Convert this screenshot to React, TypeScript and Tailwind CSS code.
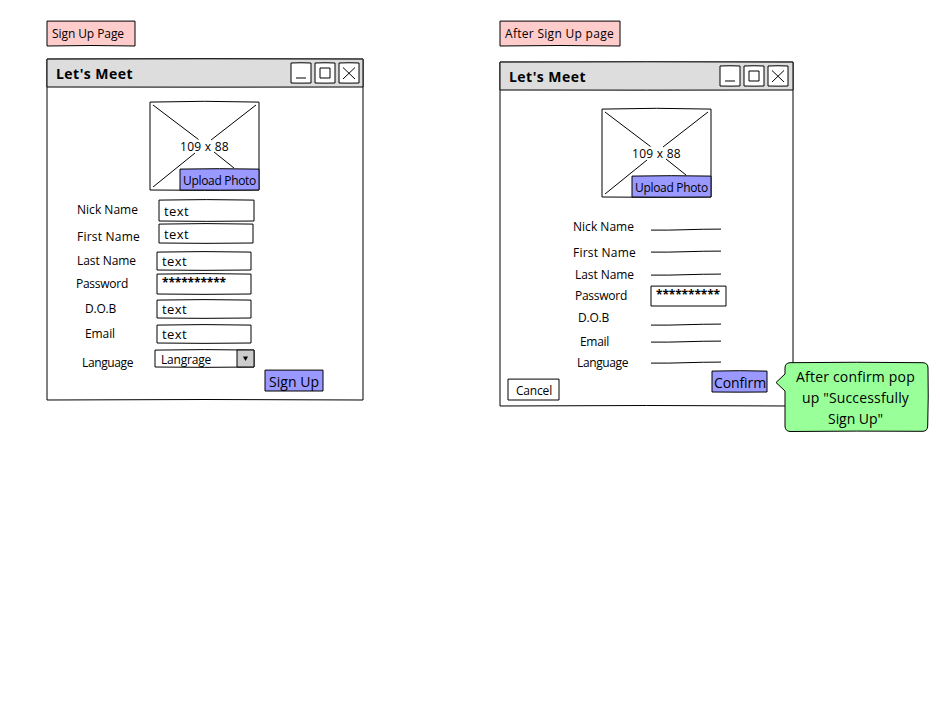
import { useLayoutEffect, useRef, useState } from "react";
import type { ReactNode } from "react";

/** Text whose tracking is adjusted so that the line fills `w` pixels. */
function Fit({ w, children, className = "" }: { w: number; children: string; className?: string }) {
  const ref = useRef<HTMLSpanElement>(null);
  const [tracking, setTracking] = useState(0);
  useLayoutEffect(() => {
    if (ref.current) {
      const natural = ref.current.getBoundingClientRect().width;
      setTracking((w - natural) / children.length);
    }
  }, []);
  return (
    <span ref={ref} className={`block w-max shrink-0 whitespace-pre ${className}`} style={{ letterSpacing: tracking }}>
      {children}
    </span>
  );
}

/** Hand-drawn rectangle: `top` and `bottom` bow the horizontal strokes. */
function Sketch({ w, h, fill = "none", top = -1, bottom = 0.7 }: { w: number; h: number; fill?: string; top?: number; bottom?: number }) {
  return (
    <svg className="absolute left-0 top-0 overflow-visible" width={w} height={h} fill={fill} stroke="#000" strokeLinejoin="round">
      <path d={`M0 .1Q${w / 2} ${0.1 + top} ${w} .1L${w} ${h}Q${w / 2} ${h + bottom} 0 ${h}Z`} />
    </svg>
  );
}

interface BoxProps {
  w: number;
  h: number;
  className: string;
  fill?: string;
  top?: number;
  bottom?: number;
  children?: ReactNode;
}

function Box({ w, h, className, fill, top, bottom, children }: BoxProps) {
  return (
    <div className={`relative flex shrink-0 ${className}`} style={{ width: w, height: h }}>
      <Sketch w={w} h={h} fill={fill} top={top} bottom={bottom} />
      <div className="relative flex w-full">{children}</div>
    </div>
  );
}

function WindowButtons() {
  return (
    <div className="flex gap-1">
      {["M5 15h10", "M5 5h10v10H5Z", "M4 4.5 16 16M16 4.5 4 16"].map((d) => (
        <svg key={d} width="20" height="20" className="overflow-visible" fill="none" stroke="#000">
          <path d="M0 0Q10-.5 20 0L20 20Q10 20.3 0 20Z" fill="#fff" strokeLinejoin="round" />
          <path d={d} />
        </svg>
      ))}
    </div>
  );
}

function Header({ w, className }: { w: number; className: string }) {
  return (
    <div className={`relative flex h-7 items-center justify-between pl-[9px] ${className}`}>
      <Sketch w={w} h={28} fill="#ddd" top={-0.6} bottom={0.3} />
      <Fit w={77} className="relative pt-0.5 text-sm font-bold">Let's Meet</Fit>
      <div className="relative">
        <WindowButtons />
      </div>
    </div>
  );
}

function Photo({ className }: { className: string }) {
  return (
    <Box w={109} h={88} className={className} top={-1.6} bottom={0.6}>
      <svg className="absolute left-0 top-0" width="109" height="88" fill="none" stroke="#000" strokeWidth="1">
        <path d="M3 3 48.5 37.5M106 3 61 38M3 85 45 51M64 50 84 66" />
      </svg>
      <div className="flex w-full flex-col">
        <Fit w={49} className="ml-[30px] mt-[37px]">109 x 88</Fit>
        <Box w={79} h={21} fill="#9999ff" className="ml-[30px] mt-3.5" top={-0.8} bottom={0.3}>
          <Fit w={73} className="ml-[3px] mt-1">Upload Photo</Fit>
        </Box>
      </div>
    </Box>
  );
}

type Row = [string, number, string];

const signUpLabels: Row[] = [
  ["Nick Name", 61, "ml-px"],
  ["First Name", 63, "ml-px mt-[11px]"],
  ["Last Name", 59, "ml-px mt-2"],
  ["Password", 52, "mt-[7px]"],
  ["D.O.B", 31, "ml-[9px] mt-[9px]"],
  ["Email", 30, "ml-[9px] mt-[9px]"],
  ["Language", 51, "ml-1.5 mt-[13px]"],
];

const afterLabels: Row[] = [
  ["Nick Name", 61, ""],
  ["First Name", 63, "mt-2.5"],
  ["Last Name", 59, "ml-0.5 mt-1.5"],
  ["Password", 52, "ml-0.5 mt-[5px]"],
  ["D.O.B", 31, "ml-[5px] mt-1.5"],
  ["Email", 29, "ml-[7px] mt-2"],
  ["Language", 51, "ml-1 mt-[5px]"],
];

function Labels({ rows, className }: { rows: Row[]; className: string }) {
  return (
    <div className={`flex shrink-0 flex-col ${className}`}>
      {rows.map(([text, w, place]) => (
        <Fit key={text} w={w} className={place}>{text}</Fit>
      ))}
    </div>
  );
}

function Rule({ className }: { className: string }) {
  return (
    <svg width="70" height="2" className={`block shrink-0 overflow-visible ${className}`} fill="none" stroke="#000">
      <path d="M0 1.1Q18 1.3 35 .7T70 .1" />
    </svg>
  );
}

function SignUpWindow() {
  return (
    <Box w={316} h={341} className="mt-[13px]" top={-0.6} bottom={-1}>
      <div className="flex w-full flex-col">
        <Header w={316} className="pr-1" />
        <Photo className="ml-[103px] mt-[15px]" />
        <div className="mt-2.5 flex h-[170px]">
          <Labels rows={signUpLabels} className="ml-[29px] w-[79px] pt-0.5" />
          <div className="flex flex-col">
            <Box w={95} h={21} className="ml-1"><Fit w={25} className="ml-[5px] mt-[3px] text-[13px] leading-4">text</Fit></Box>
            <Box w={94} h={19} className="ml-1 mt-[3px]"><Fit w={25} className="ml-[5px] mt-0.5 text-[13px] leading-4">text</Fit></Box>
            <Box w={94} h={18} className="ml-0.5 mt-[9px]"><Fit w={25} className="ml-[5px] mt-px text-[13px] leading-4">text</Fit></Box>
            <Box w={94} h={20} className="ml-0.5 mt-1"><Fit w={64} className="ml-[5px] mt-px font-bold">**********</Fit></Box>
            <Box w={94} h={18} className="ml-0.5 mt-1.5"><Fit w={25} className="ml-[5px] mt-px text-[13px] leading-4">text</Fit></Box>
            <Box w={94} h={18} className="ml-0.5 mt-[7px]"><Fit w={25} className="ml-[5px] mt-px text-[13px] leading-4">text</Fit></Box>
            <Box w={99} h={17} className="mt-[7px]">
              <Fit w={50} className="ml-1.5 mt-0.5">Langrage</Fit>
              <svg width="17" height="17" className="ml-auto overflow-visible" stroke="#000">
                <path d="M0 0H17V17H0Z" fill="#ccc" />
                <path d="M6 6.5h5L8.5 11Z" fill="#000" stroke="none" />
              </svg>
            </Box>
          </div>
        </div>
        <Box w={58} h={21} fill="#9999ff" className="ml-[218px]" top={0} bottom={0}>
          <Fit w={50} className="ml-1 mt-1 text-sm leading-4">Sign Up</Fit>
        </Box>
      </div>
    </Box>
  );
}

function AfterWindow() {
  return (
    <Box w={293} h={344} className="mt-4" top={0} bottom={-1}>
      <div className="flex w-full flex-col">
        <Header w={293} className="pr-[5px]" />
        <Photo className="ml-[102px] mt-[19px]" />
        <div className="mt-[21px] flex h-[153px]">
          <Labels rows={afterLabels} className="ml-[73px] w-[78px] pt-px" />
          <div className="flex flex-col">
            <Rule className="mt-[11px]" />
            <Rule className="mt-5" />
            <Rule className="mt-[21px]" />
            <Box w={75} h={20} className="mt-2.5" top={0} bottom={0}>
              <Fit w={64} className="ml-[5px] mt-px font-bold">**********</Fit>
            </Box>
            <Rule className="mt-[18px]" />
            <Rule className="mt-[15px]" />
            <Rule className="mt-[19px]" />
          </div>
        </div>
        <div className="flex">
          <Box w={51} h={21} className="ml-2 mt-2" top={0} bottom={0}>
            <Fit w={36} className="ml-2 mt-1">Cancel</Fit>
          </Box>
          <Box w={55} h={21} fill="#9999ff" className="ml-[153px]" top={-0.8} bottom={0.3}>
            <Fit w={52} className="ml-0.5 mt-1 text-sm leading-4">Confirm</Fit>
          </Box>
        </div>
      </div>
    </Box>
  );
}

function Callout() {
  return (
    <div className="absolute left-[776px] top-[362px] h-[70px] w-[152px] text-sm leading-[21px]">
      <svg className="absolute inset-0 overflow-visible" width="152" height="70" fill="#99ff99" stroke="#000">
        <path d="M14 .7Q80-.2 147 .7Q152 1 152 6Q152.6 35 151.7 64Q151.5 69 147 69.3Q80 68.8 14 69.5Q9 69 9 64V29L0 20.5 9 12V6Q9 1 14 .7Z" />
      </svg>
      <div className="relative flex flex-col pt-1">
        <Fit w={119} className="ml-5">After confirm pop</Fit>
        <Fit w={107} className="ml-[26px]">up "Successfully</Fit>
        <Fit w={55} className="ml-[52px]">Sign Up"</Fit>
      </div>
    </div>
  );
}

export default function App() {
  return (
    <main className="relative flex h-[711px] w-[940px] items-start overflow-hidden bg-white pl-[47px] pt-[21px] font-['Comic_Sans_MS','Open_Sans',sans-serif] text-xs text-black">
      <section className="flex w-[316px] shrink-0 flex-col">
        <Box w={88} h={25} fill="#ffcccc" className="" top={0} bottom={-1}>
          <Fit w={72} className="ml-[5px] mt-[5px]">Sign Up Page</Fit>
        </Box>
        <SignUpWindow />
      </section>
      <section className="ml-[137px] flex w-[293px] shrink-0 flex-col">
        <Box w={120} h={25} fill="#ffcccc" className="" top={0} bottom={-1}>
          <Fit w={109} className="ml-[5px] mt-[5px]">After Sign Up page</Fit>
        </Box>
        <AfterWindow />
      </section>
      <Callout />
    </main>
  );
}
